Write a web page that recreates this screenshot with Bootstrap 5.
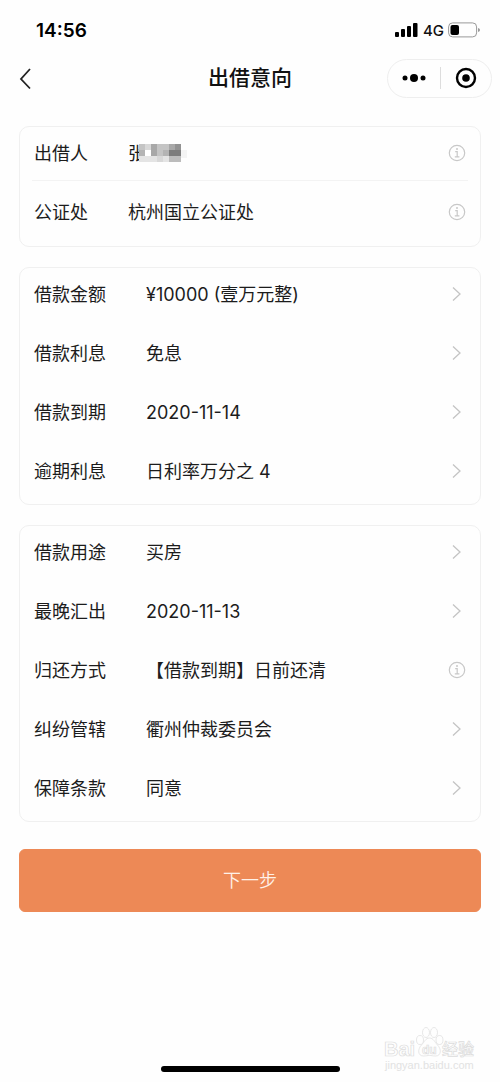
<!DOCTYPE html>
<html lang="zh-CN">
<head>
<meta charset="utf-8">
<meta name="viewport" content="width=device-width, initial-scale=1">
<title>出借意向</title>
<link href="https://cdn.jsdelivr.net/npm/bootstrap@5.3.0/dist/css/bootstrap.min.css" rel="stylesheet">
<script src="https://cdn.jsdelivr.net/npm/bootstrap@5.3.0/dist/js/bootstrap.bundle.min.js" defer></script>
<style>
body { font-family: Inter, "Noto Sans CJK SC", sans-serif; font-size: 18px; line-height: 27px; color: #1c1c1c; background: #fefefe; }
.status-bar { height: 58px; padding: 2px 20px 0 36px; }
.status-time { font-size: 19px; font-weight: 600; color: #000; }
.status-net { font-size: 15px; font-weight: 500; color: #111; }
.title-bar { height: 40px; padding: 0 8px; display: grid; grid-template-columns: 1fr auto 1fr; }
.title-bar h1 { font-size: 21px; line-height: 40px; font-weight: 500; color: #111; }
.capsule { width: 105px; height: 39px; border: 1px solid #eee; border-radius: 20px; }
.capsule-split { width: 1px; height: 22px; background: #ddd; }
.page-body { padding: 28px 19px 0; }
.panel { --bs-card-bg: #fefefe; --bs-card-border-color: #f0f0f0; --bs-card-border-radius: 10px; --bs-card-inner-border-radius: 9px; margin-bottom: 20px; }
.entry { color: #1c1c1c; padding: 0 14px 7px; min-height: 59px; text-decoration: none; }
.entry-label { width: 112px; flex: none; }
.panel-party .entry-label { width: 94px; }
.panel-party .entry { padding-bottom: 1px; min-height: 53px; }
.panel-party .entry:last-child { padding: 3px 14px 0; min-height: 59px; margin-bottom: 6px; }
.rule { height: 1px; margin: 0 12px; background: #f3f3f3; }
.name-mask { margin-left: -7px; }
.next-btn { --bs-btn-color: #fff1e8; --bs-btn-bg: #ed8956; --bs-btn-border-color: #ed8956; --bs-btn-hover-bg: #e27d49; --bs-btn-hover-color: #fff; --bs-btn-border-radius: 6px; --bs-btn-font-size: 18px; height: 63px; margin-top: 7px; font-weight: 350; }
.home-bar { width: 179px; height: 6px; background: #000; border-radius: 3px; }
.page-foot { padding-bottom: 10px; }
.watermark { right: 24px; bottom: 8px; }
</style>
</head>
<body>
<svg class="d-none" xmlns="http://www.w3.org/2000/svg">
  <symbol id="i-info" viewBox="0 0 18 18"><g fill="none" stroke="#c8c8c8" stroke-width="1.2"><circle cx="9" cy="9" r="7.7"/><path d="M7.2 7.7h2v5M6.8 12.9h4.6"/></g><circle cx="9" cy="5" r="1" fill="#c8c8c8"/></symbol>
  <symbol id="i-next" viewBox="0 0 18 18"><path d="M5 2.500 12 9l-7 6.500" fill="none" stroke="#c4c4c4" stroke-width="1.3"/></symbol>
</svg>
<div class="min-vh-100 d-flex flex-column">
  <header>
    <div class="status-bar d-flex align-items-center justify-content-between">
      <span class="status-time">14:56</span>
      <span class="d-flex align-items-center gap-1">
        <svg width="24" height="15" viewBox="0 0 24 15" aria-hidden="true"><rect x="0" y="9" width="4" height="5" rx="1"/><rect x="6" y="6" width="4" height="8" rx="1"/><rect x="12" y="3" width="4" height="11" rx="1"/><rect x="18" y="0" width="4.500" height="14" rx="1"/></svg>
        <span class="status-net">4G</span>
        <svg width="32" height="16" viewBox="0 0 32 16" aria-hidden="true"><rect x=".6" y=".9" width="28" height="14" rx="4" fill="none" stroke="#999"/><rect x="2.500" y="3" width="8.500" height="10" rx="2"/><path d="M30 6v4q2-.6 2-2t-2-2" fill="#999"/></svg>
      </span>
    </div>
    <div class="title-bar align-items-center">
      <a href="#" aria-label="返回" class="d-flex ps-2"><svg width="20" height="24" viewBox="0 0 20 24"><path d="M14 3 5 13l9 9.500" fill="none" stroke="#222" stroke-width="1.800"/></svg></a>
      <h1 class="m-0">出借意向</h1>
      <div class="capsule d-flex align-items-center ms-auto">
        <button type="button" class="btn p-0 border-0 d-flex flex-fill justify-content-center" aria-label="更多"><svg width="24" height="10" viewBox="0 0 24 10"><circle cx="3" cy="5" r="2.500"/><circle cx="12" cy="5" r="4"/><circle cx="21" cy="5" r="2.500"/></svg></button>
        <span class="capsule-split"></span>
        <button type="button" class="btn p-0 border-0 d-flex flex-fill justify-content-center" aria-label="关闭"><svg width="22" height="22" viewBox="0 0 22 22"><circle cx="11" cy="11" r="9" fill="none" stroke="#000" stroke-width="2.400"/><circle cx="11" cy="11" r="3.800"/></svg></button>
      </div>
    </div>
  </header>

  <main class="page-body d-flex flex-column">
    <section class="card panel panel-party">
      <div class="entry d-flex align-items-center">
        <span class="entry-label">出借人</span>
        <span class="d-flex align-items-center flex-grow-1">张
          <svg class="name-mask" width="48" height="18" viewBox="0 0 48 18" shape-rendering="crispEdges" aria-hidden="true">
            <path fill="#e4e4e4" d="M0 0h42v18H0z"/>
            <path fill="#c4c4c4" d="M0 0h6v6H0zM18 0h12v6H18zM18 6h6v6h-6z"/>
            <path fill="#d8d8d8" d="M6 0h6v6H6zM18 12h6v6h-6z"/>
            <path fill="#a8a8a8" d="M12 0h6v12h-6zM30 0h6v6h-6z"/>
            <path fill="#929292" d="M36 0h6v6h-6z"/>
            <path fill="#b4b4b4" d="M0 6h6v6H0zM24 6h6v6h-6z"/>
            <path fill="#fff" d="M6 6h6v6H6z"/>
            <path fill="#7c7c7c" d="M30 6h12v6H30z"/>
            <path fill="#bcbcbc" d="M30 12h12v6H30z"/>
            <path fill="#f4f4f4" d="M42 6h6v8h-6z"/>
          </svg>
        </span>
        <button type="button" class="btn p-0 border-0 d-flex" aria-label="出借人说明"><svg width="18" height="18"><use href="#i-info"/></svg></button>
      </div>
      <div class="rule"></div>
      <div class="entry d-flex align-items-center">
        <span class="entry-label">公证处</span><span class="flex-grow-1">杭州国立公证处</span>
        <button type="button" class="btn p-0 border-0 d-flex" aria-label="公证处说明"><svg width="18" height="18"><use href="#i-info"/></svg></button>
      </div>
    </section>

    <section class="card panel">
      <a href="#" class="entry d-flex align-items-center"><span class="entry-label">借款金额</span><span class="flex-grow-1">¥10000 (壹万元整)</span><svg width="18" height="18"><use href="#i-next"/></svg></a>
      <a href="#" class="entry d-flex align-items-center"><span class="entry-label">借款利息</span><span class="flex-grow-1">免息</span><svg width="18" height="18"><use href="#i-next"/></svg></a>
      <a href="#" class="entry d-flex align-items-center"><span class="entry-label">借款到期</span><span class="flex-grow-1">2020-11-14</span><svg width="18" height="18"><use href="#i-next"/></svg></a>
      <a href="#" class="entry d-flex align-items-center"><span class="entry-label">逾期利息</span><span class="flex-grow-1">日利率万分之 4</span><svg width="18" height="18"><use href="#i-next"/></svg></a>
    </section>

    <section class="card panel">
      <a href="#" class="entry d-flex align-items-center"><span class="entry-label">借款用途</span><span class="flex-grow-1">买房</span><svg width="18" height="18"><use href="#i-next"/></svg></a>
      <a href="#" class="entry d-flex align-items-center"><span class="entry-label">最晚汇出</span><span class="flex-grow-1">2020-11-13</span><svg width="18" height="18"><use href="#i-next"/></svg></a>
      <div class="entry d-flex align-items-center"><span class="entry-label">归还方式</span><span class="flex-grow-1">【借款到期】日前还清</span><button type="button" class="btn p-0 border-0 d-flex" aria-label="归还方式说明"><svg width="18" height="18"><use href="#i-info"/></svg></button></div>
      <a href="#" class="entry d-flex align-items-center"><span class="entry-label">纠纷管辖</span><span class="flex-grow-1">衢州仲裁委员会</span><svg width="18" height="18"><use href="#i-next"/></svg></a>
      <a href="#" class="entry d-flex align-items-center"><span class="entry-label">保障条款</span><span class="flex-grow-1">同意</span><svg width="18" height="18"><use href="#i-next"/></svg></a>
    </section>

    <button type="button" class="btn next-btn w-100">下一步</button>
  </main>

  <footer class="page-foot position-relative mt-auto">
    <div class="home-bar mx-auto"></div>
    <svg class="watermark position-absolute" width="92" height="48" viewBox="0 0 92 48" fill="#fefefe" stroke="#dcdcdc" stroke-width=".7" font-family="'Liberation Sans', 'Noto Sans CJK SC', sans-serif">
      <text x="0" y="30" font-size="20" font-weight="700">Bai</text>
      <ellipse cx="36" cy="14" rx="3.500" ry="4.500"/><ellipse cx="42" cy="6.500" rx="3.500" ry="5"/><ellipse cx="50" cy="6.500" rx="3.500" ry="5"/><ellipse cx="55.500" cy="14" rx="3.500" ry="4.500"/>
      <path d="M45.500 12c4 0 5 4 8 7 4 4 4 11-2 11-3 0-4-.6-6-.6s-3 .6-6 .6c-6 0-6-7-2-11 3-3 4-7 8-7z"/>
      <text x="38" y="28" font-size="12" font-weight="700">du</text>
      <text x="58" y="29" font-size="16" font-weight="500">经验</text>
      <text x="1" y="43" font-size="11" fill="#e2e2e2" stroke="none">jingyan.baidu.com</text>
    </svg>
  </footer>
</div>
</body>
</html>
